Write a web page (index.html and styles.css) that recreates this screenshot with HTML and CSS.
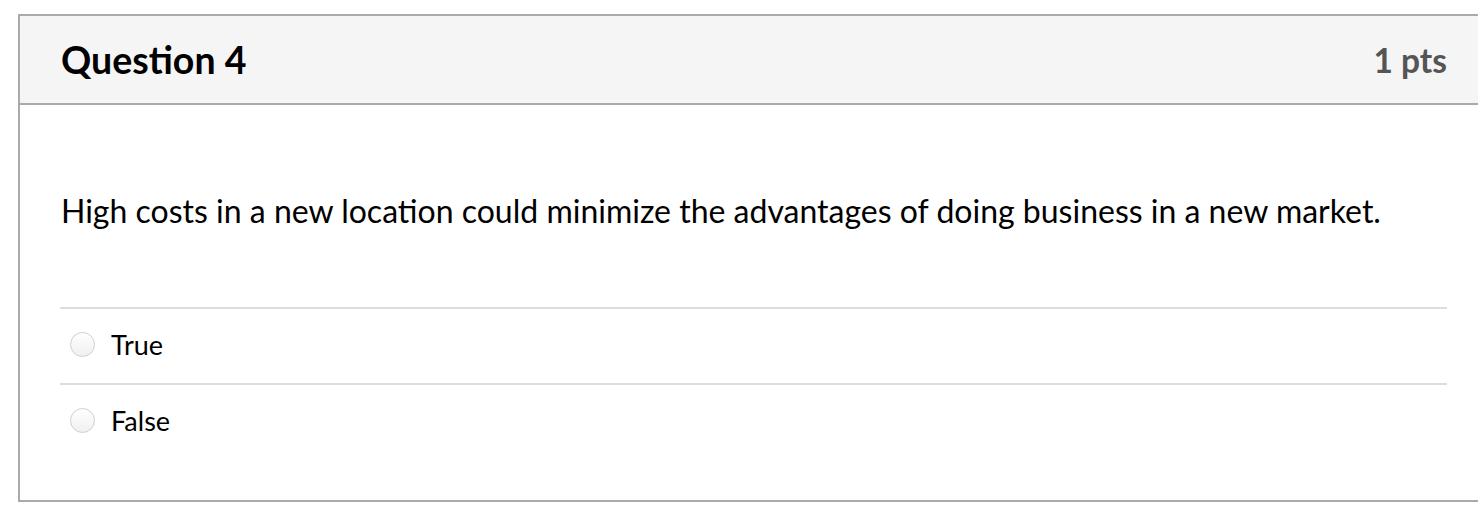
FILE: index.html
```html
<!DOCTYPE html>
<html>
<head>
<meta charset="utf-8">
<link rel="stylesheet" href="styles.css">
</head>
<body>
<div class="question">
  <div class="header">
    <h2 class="title">Question 4</h2>
    <span class="pts">1 pts</span>
  </div>
  <div class="body">
    <p class="text">High costs in a new location could minimize the advantages of doing business in a new market.</p>
    <div class="answers">
      <label class="answer"><span class="radio"></span><span class="label">True</span></label>
      <label class="answer"><span class="radio"></span><span class="label">False</span></label>
    </div>
  </div>
</div>
</body>
</html>
```
FILE: styles.css
```css
html, body {
  margin: 0;
  padding: 0;
  background: #fff;
  overflow: hidden;
}
body {
  padding: 14px 0 0 18px;
  font-family: Lato, "Liberation Sans", sans-serif;
  color: #000;
}
.question {
  width: 1471px;
  box-sizing: border-box;
  border: 2px solid #aaaaaa;
}
.header {
  background: #f5f5f5;
  height: 87px;
  border-bottom: 2px solid #aaaaaa;
  display: flex;
  align-items: center;
  justify-content: space-between;
  padding: 0 40px 0 41px;
}
.title {
  margin: 0;
  font-size: 37.5px;
  font-weight: 700;
  color: #000;
}
.pts {
  font-size: 33.5px;
  font-weight: 700;
  color: #555;
}
.body {
  padding: 86px 40px 41px 40px;
}
.text {
  margin: 0 0 0 1px;
  font-size: 32px;
  line-height: 40px;
}
.answers {
  margin-top: 76px;
}
.answer {
  display: flex;
  align-items: center;
  box-sizing: border-box;
  height: 76px;
  padding-bottom: 4px;
  border-top: 2px solid #dddddd;
}
.radio {
  width: 23px;
  height: 23px;
  border-radius: 50%;
  border: 1px solid #cfcfcf;
  background: linear-gradient(#ffffff, #f0f0f0);
  margin-left: 10px;
  margin-right: 16px;
}
.label {
  font-size: 27px;
}
```
